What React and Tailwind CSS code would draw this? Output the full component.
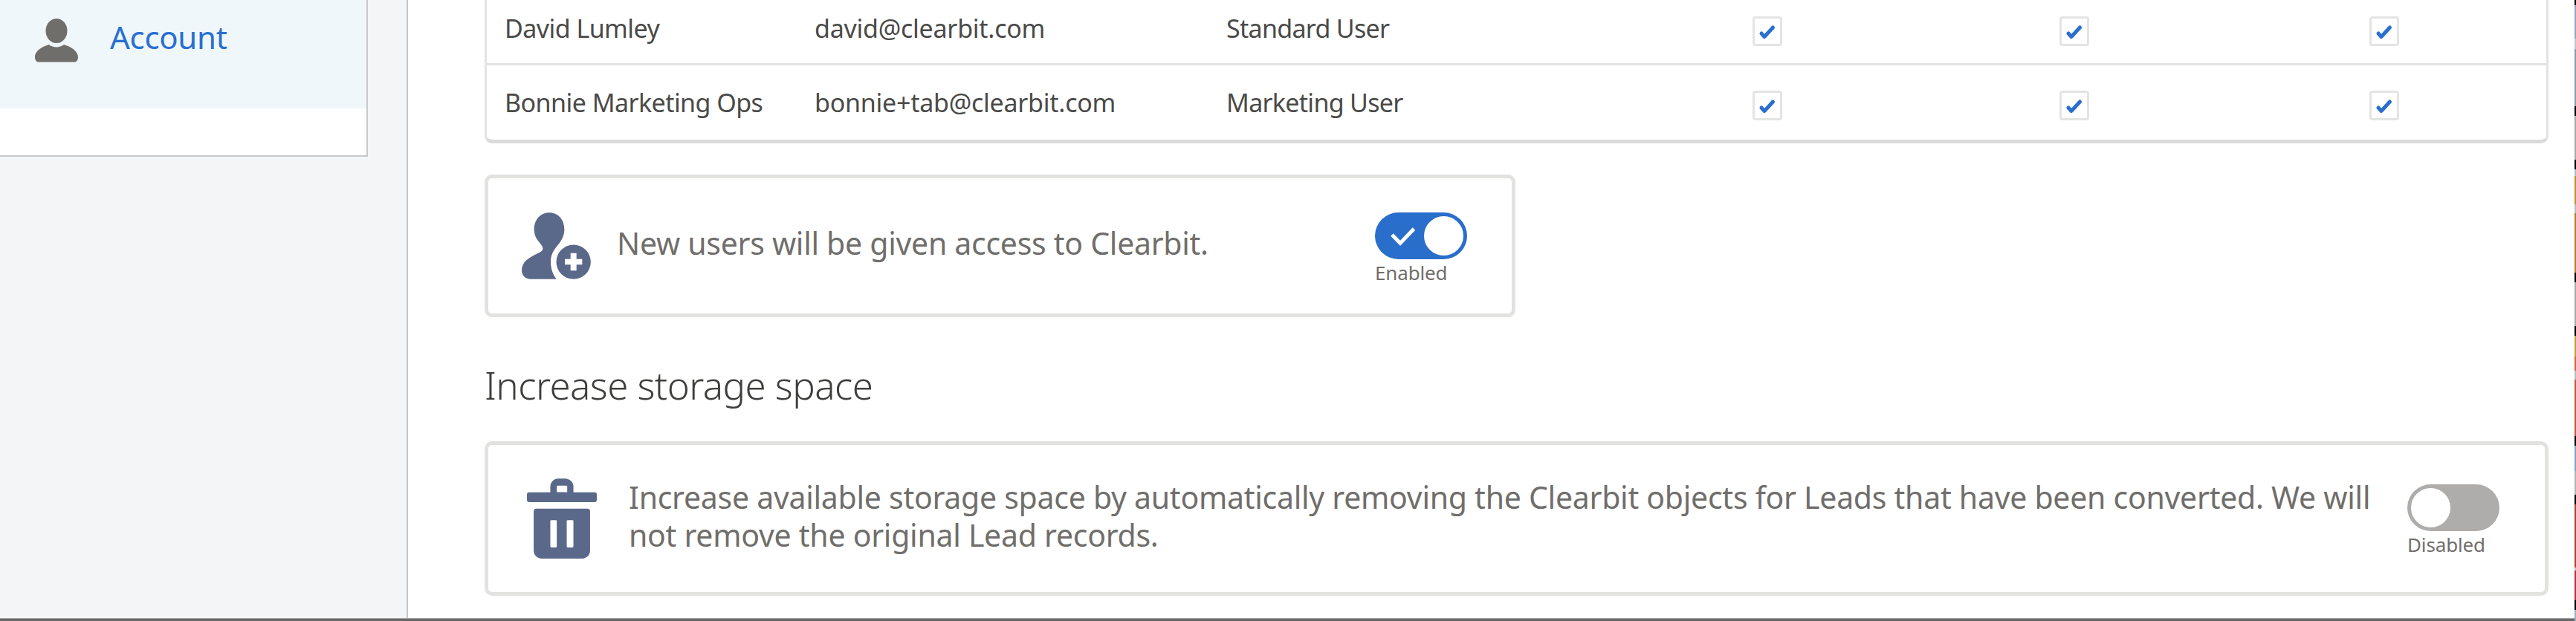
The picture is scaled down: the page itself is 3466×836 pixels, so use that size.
import React, { useState } from 'react';

const USERS = [
    { name: 'David Lumley', email: 'david@clearbit.com', profile: 'Standard User' },
    { name: 'Bonnie Marketing Ops', email: 'bonnie+tab@clearbit.com', profile: 'Marketing User' },
];

// desktop wallpaper slivers showing past the right edge of the window
const EDGE = [
    'h-[7px] bg-black', 'h-[45px] bg-[#9aa5bd]', 'h-[14px] bg-[#c4c6cc]', 'h-[77px] bg-[#8d97ad]',
    'h-[13px] bg-black', 'h-[59px] bg-[#aaa8a8]',
    'h-[13px] bg-black', 'h-[9px] bg-[#b4bacb]', 'h-[38px] bg-[#c58a35]', 'h-[12px] bg-[#bdbdbd]', 'h-[80px] bg-[#b87c2c]',
    'h-[13px] bg-black', 'h-[59px] bg-[#aaa8a8]',
    'h-[13px] bg-black', 'h-[28px] bg-[#c59a40]', 'h-[19px] bg-[#c9693c]', 'h-[12px] bg-[#bdbdbd]', 'h-[76px] bg-[#bd5a38]',
    'h-[13px] bg-black', 'h-[34px] bg-[#7fa3c0]', 'h-[32px] bg-[#b3b3b3]',
    'h-[13px] bg-black', 'h-[85px] bg-[#ad4038]', 'h-[4px] bg-[#c8c8c8]', 'h-[40px] bg-[#b5323c]',
    'h-[13px] bg-black', 'h-[15px] bg-[#9fb0b8]',
];

function PersonIcon() {
    return (
        <svg className="w-[58px] h-[59px] shrink-0" viewBox="47 25 58 59" fill="#706e6b">
            <ellipse cx="76" cy="41.5" rx="14.5" ry="16.5" />
            <path d="M65.5 60C60 62 47 67 47 77c0 4 2 6.5 5 6.5h48c3 0 5-2.500 5-6.500 0-10-13-15-19-17-3 2.300-6.500 3.500-10 3.500s-7.500-1.200-10.500-3.500Z" />
        </svg>
    );
}

function AddUserIcon() {
    return (
        <svg className="w-[93px] h-[90px] shrink-0" viewBox="186 197 279 270" fill="#5a698a">
            <path d="M297 198C335 198 358 228 358 266C358 290 347 310 334 326C318 345 303 365 303 395C303 425 312 448 326 466H222C200 466 186 450 186 430C186 398 213 381 243 366C262 357 272 352 271 341C269 322 236 308 236 266C236 228 260 198 297 198Z" />
            <circle cx="395" cy="397" r="69.500" />
            <path fill="#fff" d="M383 361h24v24h23v23h-23v24h-24v-24h-23v-23h23Z" />
        </svg>
    );
}

function TrashIcon() {
    return (
        <svg className="w-[94px] h-[108px] shrink-0" viewBox="58 42 281 323" fill="#5a698a">
            <path fillRule="evenodd" d="M152 100V75a32 32 0 0 1 32-32h29a32 32 0 0 1 32 32v25ZM178 98h42V75q0-4-4-4h-34q-4 0-4 4Z" />
            <rect x="58" y="98" width="281" height="40" rx="9" />
            <path fillRule="evenodd" d="M97 164H301q11 0 11 11V333a32 32 0 0 1-32 32H117a32 32 0 0 1-32-32V175q0-11 12-11ZM156 210q-4 0-4 4V316q0 4 4 4h18q4 0 4-4V214q0-4-4-4ZM222 210q-4 0-4 4V316q0 4 4 4h19q4 0 4-4V214q0-4-4-4Z" />
        </svg>
    );
}

function Checkbox() {
    return (
        <div className="w-10 h-10 mt-[34px] rounded-[4px] border-[3px] border-[#e4e4e4] bg-white">
            <svg className="w-[34px] h-[34px]" viewBox="0 0 34 34" fill="none" stroke="#2a6fd0" strokeWidth="5" strokeLinecap="round" strokeLinejoin="round">
                <path d="M9 20l4 4.500L24.500 12" />
            </svg>
        </div>
    );
}

function Toggle({ on, onClick }) {
    return (
        <div className="w-[124px] shrink-0">
            <button
                onClick={onClick}
                className={`flex items-center w-[124px] h-[63px] px-[5px] rounded-full ${on ? 'justify-between bg-[#2a6ecb]' : 'justify-start bg-[#afadab]'}`}
            >
                {on && (
                    <svg className="w-[34px] h-[28px] ml-[15px]" viewBox="0 0 34 28" fill="none" stroke="#fff" strokeWidth="5">
                        <path d="M3 12l11 11.500L32.500 4" />
                    </svg>
                )}
                <span className="block w-[53px] h-[53px] rounded-full bg-white" />
            </button>
            <div className="mt-[2px] text-[26px] leading-[32px] tracking-[-0.15px] text-[#706e6b]">{on ? 'Enabled' : 'Disabled'}</div>
        </div>
    );
}

export default function App() {
    const [access, setAccess] = useState(true);
    const [cleanup, setCleanup] = useState(false);

    return (
        <div className="flex w-[3466px] h-[836px] overflow-hidden bg-white font-['Noto_Sans',sans-serif]">
            <div className="flex flex-col flex-1 min-w-0">
                <div className="flex flex-1 min-h-0">
                    {/* Sidebar */}
                    <aside className="w-[549px] shrink-0 bg-[#f4f5f7] border-r-2 border-[#c6c6c6]">
                        <div className="w-[495px] h-[211px] bg-white border-r-2 border-b-2 border-[#c9c9c9]">
                            <a className="flex items-start h-[146px] pl-[47px] pt-[25px] gap-[43px] bg-[#eff7fa]">
                                <PersonIcon />
                                <span className="text-[42px] leading-[50px] tracking-[-0.3px] text-[#2a6fd0]">Account</span>
                            </a>
                        </div>
                    </aside>

                    <main className="flex-1 pl-[103px] pr-[35px]">
                        {/* User table */}
                        <div className="h-[193px] overflow-hidden border-x-[3px] border-b-[5px] border-x-[#e3e3e3] border-b-[#dadada] rounded-b-[10px]">
                            <div className="-mt-[12px]">
                                {USERS.map((user) => (
                                    <div
                                        key={user.email}
                                        className="grid grid-cols-[417px_554px_708px_413px_417px_1fr] h-[100px] pl-[24px] border-b-[3px] border-[#e3e3e3] last:border-b-0 text-[34px] leading-[100px] whitespace-nowrap text-[#4a4a48]"
                                    >
                                        <div className="tracking-[-0.55px]">{user.name}</div>
                                        <div className="tracking-[-0.25px]">{user.email}</div>
                                        <div className="tracking-[-0.7px]">{user.profile}</div>
                                        <Checkbox />
                                        <Checkbox />
                                        <Checkbox />
                                    </div>
                                ))}
                            </div>
                        </div>

                        {/* New user access */}
                        <div className="flex items-start w-[1387px] h-[192px] mt-[42px] pl-[45px] pt-[46px] border-[5px] border-[#e2e2e0] rounded-[10px]">
                            <AddUserIcon />
                            <p className="w-[1055px] pl-[35px] pt-[15px] text-[41px] leading-[52px] tracking-[-0.28px] text-[#706e6b]">
                                New users will be given access to Clearbit.
                            </p>
                            <Toggle on={access} onClick={() => setAccess(!access)} />
                        </div>

                        <h2 className="mt-[61px] text-[51px] leading-[60px] font-light tracking-[-0.55px] text-[#3e3e3c]">
                            Increase storage space
                        </h2>

                        {/* Storage cleanup */}
                        <div className="flex items-start h-[208px] mt-[46px] pl-[52px] pt-[45px] border-[5px] border-[#e2e2e0] rounded-[10px]">
                            <TrashIcon />
                            <p className="w-[2436px] pl-[43px] text-[41px] leading-[51px] tracking-[-0.27px] text-[#706e6b]">
                                Increase available storage space by automatically removing the Clearbit objects for Leads that have been converted. We will
                                <br />
                                not remove the original Lead records.
                            </p>
                            <div className="pt-2">
                                <Toggle on={cleanup} onClick={() => setCleanup(!cleanup)} />
                            </div>
                        </div>
                    </main>
                </div>
                <div className="h-[4px] shrink-0 bg-[#696969] border-t border-[#a5a5a5]" />
            </div>

            <div className="flex flex-col w-[2px] shrink-0">
                {EDGE.map((cls, i) => (
                    <div key={i} className={`shrink-0 ${cls}`} />
                ))}
            </div>
        </div>
    );
}
